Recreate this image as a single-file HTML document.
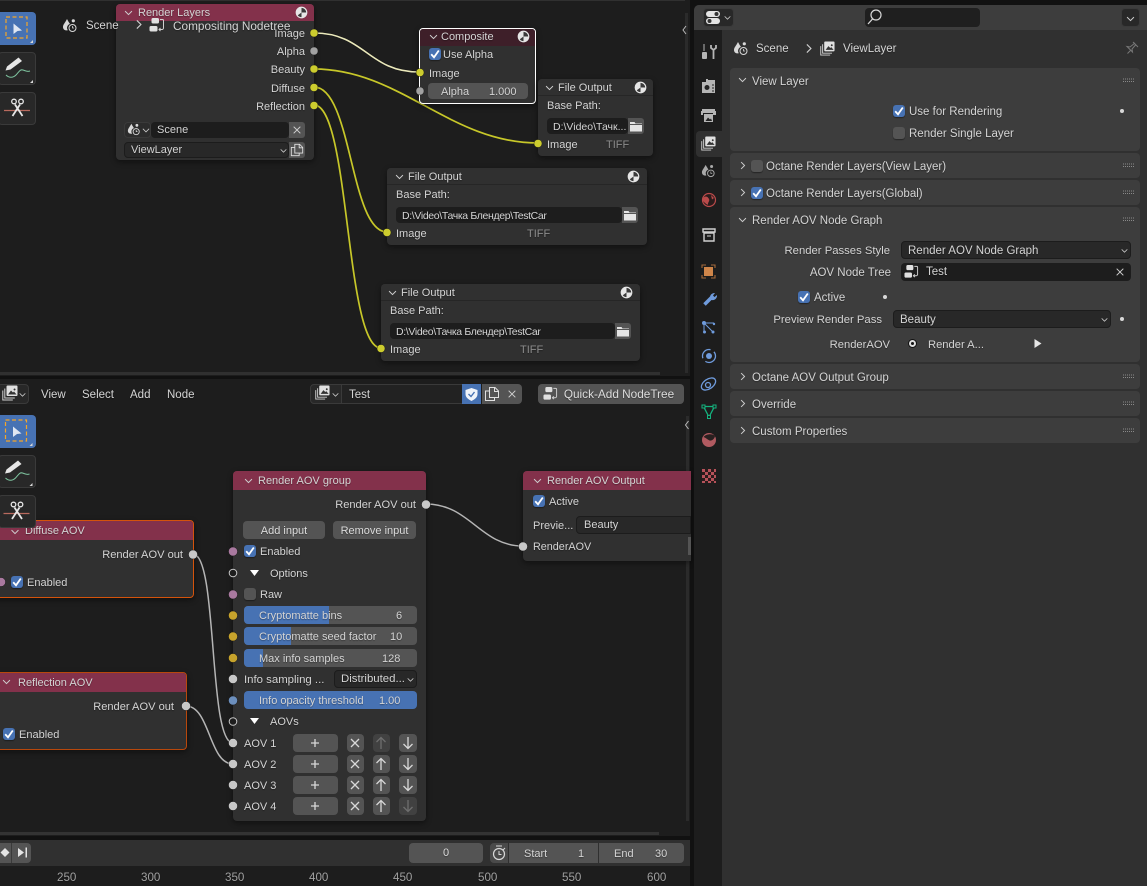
<!DOCTYPE html>
<html><head><meta charset="utf-8"><title>Blender</title>
<style>
html,body{margin:0;padding:0;background:#0e0e0e}
#p{position:relative;width:1147px;height:886px;overflow:hidden;background:#111;font:11px/16px "Liberation Sans","Noto Sans CJK SC",sans-serif;color:#d4d4d4;text-shadow:0 1px 1px rgba(0,0,0,.35)}
#p div,#p span{position:absolute;box-sizing:border-box}
.t{white-space:nowrap;height:16px;margin-top:1px}
.pt{font-size:11.5px}
.r{color:#a0a0a0;font-size:11.600px}
.n{background:#303030;border-radius:4px;box-shadow:0 2px 6px rgba(0,0,0,.45)}
.h{left:0;right:0;top:0;background:#83314b;border-radius:4px 4px 0 0}
.btn{background:#545454;border-radius:4px;text-align:center;height:18px;line-height:18px;color:#dcdcdc;padding-top:1px}
.sl{background:#545454;border-radius:4px;height:18px;overflow:hidden}
.fi{background:#4772b3;left:0;top:0;bottom:0}
.fd{background:#1d1d1d;border-radius:4px;height:18px;line-height:18px;padding-top:1px}
.dd{background:#282828;border-radius:4px;height:18px;line-height:18px;border:1px solid #1c1c1c;padding-top:1px}
.pth{font-size:10.5px;letter-spacing:-.35px}
.cb{width:12px;height:12px;border-radius:3px;background:#4772b3;box-shadow:0 1px 1px rgba(0,0,0,.4)}
.cu{width:12px;height:12px;border-radius:3px;background:#545454;box-shadow:0 1px 1px rgba(0,0,0,.4)}
.pn{background:#3d3d3d;border-radius:4px;left:730px;width:410px}
.tb{background:#282828;border:1px solid #3a3a3a;border-radius:4px}
.a{background:#545454;border-radius:4px;height:18px}
svg{position:absolute;left:0;top:0;overflow:visible}
</style></head><body><div id="p">
<svg width="0" height="0" style="position:absolute"><defs>
<symbol id="chd" viewBox="0 0 16 16"><path d="M3 6l5 5 5-5" fill="none" stroke="currentColor" stroke-width="1.4"/></symbol>
<symbol id="chr" viewBox="0 0 16 16"><path d="M6 3l5 5-5 5" fill="none" stroke="currentColor" stroke-width="1.4"/></symbol>
<symbol id="chk" viewBox="0 0 13 13"><path d="M2.200 6.300l2.800 3 4.800-6.800" fill="none" stroke="#fff" stroke-width="1.800"/></symbol>
<symbol id="x" viewBox="0 0 12 12"><path d="M2 2l8 8M10 2l-8 8" stroke="currentColor" stroke-width="1.2"/></symbol>
<symbol id="sph" viewBox="0 0 14 14"><circle cx="7" cy="7" r="6.300" fill="#e6e6e6"/><path d="M7 2a5 5 0 0 1 5 5H7zM7 7L3 10a5 5 0 0 0 4 2z" fill="#3a3a3a"/></symbol>
<symbol id="scene" viewBox="0 0 16 16"><path d="M5 2C3 6 1 7.500 1 10c0 2 1.500 3.400 3.500 3.400 0.500 0 0.900-0.100 1.300-0.300C5 12 4.700 10.500 5.500 9 6.200 7.800 7 7.200 8 7 7 5.500 6 4 5 2z" fill="#d8d8d8"/><circle cx="11.300" cy="3.800" r="1.600" fill="#d8d8d8"/><circle cx="10.500" cy="11" r="3.500" fill="none" stroke="#d8d8d8" stroke-width="1"/><path d="M10.500 9v2h1.500" fill="none" stroke="#d8d8d8" stroke-width=".8"/></symbol>
<symbol id="tree" viewBox="0 0 16 16"><rect x="2.500" y="1" width="7.500" height="5.500" rx="1.500" fill="#e0e0e0"/><rect x="0.500" y="9" width="8" height="5.500" rx="1.500" fill="#e0e0e0"/><path d="M11 2.500h2.500a1 1 0 0 1 1 1V11a1.500 1.500 0 0 1-1.500 1.500h-2.500M11.500 11l-1.500 1.500 1.500 1.500" fill="none" stroke="#d0d0d0"/></symbol>
<symbol id="vl" viewBox="0 0 16 16"><rect x="4.500" y="0.500" width="11" height="10.500" fill="#e0e0e0" rx="1"/><path d="M6 9.500l3-4 2 2 1-1 2.500 3zM12.500 3.500a1 1 0 1 0 .1 0" fill="#333"/><path d="M2.800 3.500V13h10M0.800 5.500V15h10" fill="none" stroke="#d0d0d0" stroke-width="1"/></symbol>
<symbol id="folder" viewBox="0 0 14 14"><path d="M1 3h4.500l1 1.500H13V5H1zM1 6h12v6.500H1z" fill="#e4e4e4"/></symbol>
<symbol id="dup" viewBox="0 0 16 16"><path d="M5.500 1.500h5.500l3.500 3.500v6.500h-9zM10.500 1.500v4h4M5.500 5H1.500v9.500h9v-3" fill="none" stroke="#e0e0e0"/></symbol>
<symbol id="box" viewBox="0 0 33 33"><rect x="6" y="5" width="21" height="21" fill="none" stroke="#f4a62a" stroke-width="1.200" stroke-dasharray="4 2.500"/><path d="M13.500 11.500l8.500 7-4.500.5-4 3z" fill="#dfe6f2"/><path d="M33 28v3h-3z" fill="#d8d8d8"/></symbol>
<symbol id="pen" viewBox="0 0 33 33"><path d="M5.500 18.500l1.500-4L18.500 5.500l3.500 3.500L10.500 17.500z" fill="#e6e6e6"/><path d="M6 23c3 3 7 3 10 0s4-6 7-5 4 2 7 1" fill="none" stroke="#7fc5a0" stroke-width="1"/><path d="M33 28v3h-3z" fill="#d8d8d8"/></symbol>
<symbol id="cut" viewBox="0 0 33 33"><path d="M4 18.500h26" stroke="#b96a5e" stroke-width="1.300"/><path d="M12.500 24L20 12.500M22.500 24L15 12.500" stroke="#e6e6e6" stroke-width="1.800" fill="none"/><circle cx="14" cy="9.500" r="2.300" fill="none" stroke="#e6e6e6" stroke-width="1.300"/><circle cx="21" cy="9.500" r="2.300" fill="none" stroke="#e6e6e6" stroke-width="1.300"/></symbol>
</defs></svg>

<!-- top editor -->
<div style="left:0;top:0;width:690px;height:376px;background:#1d1d1d"></div>
<div style="left:0;top:0;width:685px;height:1px;background:#303030"></div>
<div style="left:0;top:372px;width:660px;height:3px;background:#303030"></div>
<!-- bottom editor -->
<div style="left:0;top:379px;width:690px;height:457px;background:#1d1d1d"></div>
<div style="left:0;top:832px;width:659px;height:3px;background:#333"></div>
<div style="left:0;top:840px;width:690px;height:26px;background:#303030"></div>
<div style="left:0;top:866px;width:690px;height:20px;background:#1d1d1d"></div>
<div style="left:685px;top:13px;width:3px;height:360px;background:#2b2b2b"></div>
<div style="left:686px;top:416px;width:3px;height:405px;background:#2b2b2b"></div>

<!-- links -->
<svg width="1147" height="886" fill="none">
<path d="M314 33C365 33 368 72 419 72" stroke="#191919" stroke-width="3"/><path d="M314 33C365 33 368 72 419 72" stroke="#ebe9bb" stroke-width="1.600"/>
<path d="M314 69C400 69 450 143 538 143" stroke="#c7c729" stroke-width="1.700"/>
<path d="M314 87C352 87 350 232 387 232" stroke="#c7c729" stroke-width="1.700"/>
<path d="M314 105C350 105 345 348 381 348" stroke="#c7c729" stroke-width="1.700"/>
<path d="M426 504C470 504 480 546 523 546" stroke="#b5b5b5" stroke-width="1.500"/>
<path d="M193 554C218 554 208 743 233 743" stroke="#b5b5b5" stroke-width="1.500"/>
<path d="M186 706C210 706 209 764 233 764" stroke="#b5b5b5" stroke-width="1.500"/>
</svg>

<!-- Render Layers -->
<div class="n" style="left:116px;top:4px;width:198px;height:156px"><div class="h" style="height:17px"></div></div>
<span class="t" style="left:138px;top:4px">Render Layers</span>
<div class="tb" style="left:124px;top:122px;width:27px;height:16px;background:#2c2c2c"></div>
<div class="fd" style="left:151px;top:122px;width:138px;height:16px;line-height:15px;padding-left:6px">Scene</div>
<div class="a" style="left:289px;top:122px;width:16px;height:16px;border-radius:0 3px 3px 0"></div>
<div class="dd" style="left:124px;top:142px;width:165px;height:16px;line-height:14px;padding-left:6px;padding-top:0">ViewLayer</div>
<div class="a" style="left:289px;top:142px;width:16px;height:16px;border-radius:0 3px 3px 0"></div>
<span class="t" style="right:842px;top:25px">Image</span>
<span class="t" style="right:842px;top:43px">Alpha</span>
<span class="t" style="right:842px;top:61px">Beauty</span>
<span class="t" style="right:842px;top:80px">Diffuse</span>
<span class="t" style="right:842px;top:98px">Reflection</span>

<!-- breadcrumb overlay -->
<span class="t pt" style="left:86px;top:17px">Scene</span>
<span class="t" style="left:173px;top:17px;font-size:11.800px">Compositing Nodetree</span>

<!-- Composite -->
<div class="n" style="left:419px;top:28px;width:117px;height:76px;border:1px solid #fff"><div class="h" style="height:17px;background:#3e1f29;border-radius:3px 3px 0 0"></div></div>
<span class="t" style="left:441px;top:28px">Composite</span>
<div class="cb" style="left:429px;top:48px"></div>
<span class="t" style="left:443px;top:46px">Use Alpha</span>
<span class="t" style="left:429px;top:65px">Image</span>
<div class="a" style="left:428px;top:83px;width:100px;height:16px"></div>
<span class="t" style="left:441px;top:83px">Alpha</span>
<span class="t" style="left:489px;top:83px">1.000</span>

<!-- File outputs -->
<div class="n" style="left:538px;top:79px;width:115px;height:77px"><div class="h" style="height:17px;border-bottom:1px solid #262626;background:#303030"></div></div>
<span class="t" style="left:558px;top:79px">File Output</span>
<span class="t" style="left:547px;top:97px">Base Path:</span>
<div class="fd" style="left:547px;top:118px;width:81px;height:16px;line-height:16px;padding-left:6px;font-size:10.500px">D:\Video\Тачк...</div>
<div class="a" style="left:628px;top:118px;width:16px;height:16px;border-radius:0 3px 3px 0"></div>
<span class="t" style="left:547px;top:136px">Image</span>
<span class="t" style="left:606px;top:136px;color:#8c8c8c">TIFF</span>

<div class="n" style="left:387px;top:168px;width:260px;height:77px"><div class="h" style="height:17px;border-bottom:1px solid #262626;background:#303030"></div></div>
<span class="t" style="left:408px;top:168px">File Output</span>
<span class="t" style="left:396px;top:186px">Base Path:</span>
<div class="fd pth" style="left:396px;top:207px;width:226px;height:16px;line-height:16px;padding-left:6px">D:\Video\Тачка Блендер\TestCar</div>
<div class="a" style="left:622px;top:207px;width:16px;height:16px;border-radius:0 3px 3px 0"></div>
<span class="t" style="left:396px;top:225px">Image</span>
<span class="t" style="left:527px;top:225px;color:#8c8c8c">TIFF</span>

<div class="n" style="left:381px;top:284px;width:259px;height:77px"><div class="h" style="height:17px;border-bottom:1px solid #262626;background:#303030"></div></div>
<span class="t" style="left:401px;top:284px">File Output</span>
<span class="t" style="left:390px;top:302px">Base Path:</span>
<div class="fd pth" style="left:390px;top:323px;width:225px;height:16px;line-height:16px;padding-left:6px">D:\Video\Тачка Блендер\TestCar</div>
<div class="a" style="left:615px;top:323px;width:16px;height:16px;border-radius:0 3px 3px 0"></div>
<span class="t" style="left:390px;top:341px">Image</span>
<span class="t" style="left:520px;top:341px;color:#8c8c8c">TIFF</span>

<!-- top tools -->
<div style="left:0;top:12px;width:36px;height:33px;background:#4772b3;border-radius:0 4px 4px 0"></div>
<div class="tb" style="left:-2px;top:52px;width:38px;height:33px"></div>
<div class="tb" style="left:-2px;top:92px;width:38px;height:33px"></div>

<!-- bottom header -->
<div class="tb" style="left:-3px;top:384px;width:32px;height:20px"></div>
<span class="t pt" style="left:41px;top:386px">View</span>
<span class="t pt" style="left:82px;top:386px">Select</span>
<span class="t pt" style="left:130px;top:386px">Add</span>
<span class="t pt" style="left:167px;top:386px">Node</span>
<div class="tb" style="left:310px;top:384px;width:32px;height:20px;border-radius:4px 0 0 4px"></div>
<div class="fd" style="left:341px;top:384px;width:121px;height:20px;line-height:18px;padding-left:7px;border-radius:0;background:#222;border:1px solid #3a3a3a;border-right:0;font-size:11.500px">Test</div>
<div style="left:462px;top:384px;width:19px;height:20px;background:#4772b3"></div>
<div class="a" style="left:482px;top:384px;width:20px;height:20px;border-radius:0"></div>
<div class="a" style="left:502px;top:384px;width:20px;height:20px;border-radius:0 4px 4px 0"></div>
<div class="btn" style="left:538px;top:384px;width:146px;height:20px;line-height:19px;padding-left:16px;font-size:11.800px">Quick-Add NodeTree</div>

<!-- bottom tools (below nodes) -->
<div style="left:0;top:415px;width:36px;height:33px;background:#4772b3;border-radius:0 4px 4px 0"></div>
<div class="tb" style="left:-2px;top:455px;width:38px;height:33px"></div>

<!-- Diffuse AOV -->
<div class="n" style="left:-20px;top:520px;width:214px;height:78px;border:1px solid #d4530b"><div class="h" style="height:19px;border-radius:3px 3px 0 0"></div></div>
<span class="t" style="left:25px;top:522px">Diffuse AOV</span>
<span class="t" style="right:964px;top:546px;font-size:11.100px">Render AOV out</span>
<div class="cb" style="left:11px;top:576px"></div>
<span class="t" style="left:27px;top:574px">Enabled</span>

<!-- Reflection AOV -->
<div class="n" style="left:-20px;top:672px;width:207px;height:78px;border:1px solid #b8480c"><div class="h" style="height:19px;border-radius:3px 3px 0 0"></div></div>
<span class="t" style="left:18px;top:674px">Reflection AOV</span>
<span class="t" style="right:973px;top:698px;font-size:11.100px">Render AOV out</span>
<div class="cb" style="left:3px;top:728px"></div>
<span class="t" style="left:19px;top:726px">Enabled</span>

<div class="tb" style="left:-2px;top:495px;width:38px;height:33px"></div>

<!-- Render AOV group -->
<div class="n" style="left:233px;top:471px;width:193px;height:350px"><div class="h" style="height:19px"></div></div>
<span class="t" style="left:258px;top:472px">Render AOV group</span>
<span class="t" style="right:731px;top:496px;font-size:11.100px">Render AOV out</span>
<div class="btn" style="left:243px;top:521px;width:82px">Add input</div>
<div class="btn" style="left:333px;top:521px;width:83px">Remove input</div>
<div class="cb" style="left:244px;top:545px"></div><span class="t" style="left:260px;top:543px">Enabled</span>
<span class="t" style="left:270px;top:565px">Options</span>
<div class="cu" style="left:244px;top:588px"></div><span class="t" style="left:260px;top:586px">Raw</span>
<div class="sl" style="left:244px;top:606px;width:173px"><div class="fi" style="width:85px"></div><span class="t" style="left:15px;top:1px">Cryptomatte bins</span><span class="t" style="left:152px;top:1px">6</span></div>
<div class="sl" style="left:244px;top:627px;width:173px"><div class="fi" style="width:47px"></div><span class="t" style="left:15px;top:1px">Cryptomatte seed factor</span><span class="t" style="left:146px;top:1px">10</span></div>
<div class="sl" style="left:244px;top:649px;width:173px"><div class="fi" style="width:19px"></div><span class="t" style="left:15px;top:1px">Max info samples</span><span class="t" style="left:138px;top:1px">128</span></div>
<span class="t" style="left:244px;top:671px;font-size:11.400px">Info sampling ...</span>
<div class="dd" style="left:334px;top:670px;width:83px;padding-left:6px;line-height:16px;padding-top:0;font-size:11.400px">Distributed...</div>
<div class="sl" style="left:244px;top:691px;width:173px;background:#4772b3"><span class="t" style="left:15px;top:1px">Info opacity threshold</span><span class="t" style="left:135px;top:1px">1.00</span></div>
<span class="t" style="left:270px;top:713px">AOVs</span>
<span class="t" style="left:244px;top:735px">AOV 1</span><span class="t" style="left:244px;top:756px">AOV 2</span><span class="t" style="left:244px;top:777px">AOV 3</span><span class="t" style="left:244px;top:798px">AOV 4</span>
<div class="a" style="left:293px;top:734px;width:45px"></div><div class="a" style="left:293px;top:755px;width:45px"></div><div class="a" style="left:293px;top:776px;width:45px"></div><div class="a" style="left:293px;top:797px;width:45px"></div>
<div class="a" style="left:347px;top:734px;width:17px"></div><div class="a" style="left:347px;top:755px;width:17px"></div><div class="a" style="left:347px;top:776px;width:17px"></div><div class="a" style="left:347px;top:797px;width:17px"></div>
<div class="a" style="left:373px;top:734px;width:17px;background:#414141"></div><div class="a" style="left:373px;top:755px;width:17px"></div><div class="a" style="left:373px;top:776px;width:17px"></div><div class="a" style="left:373px;top:797px;width:17px"></div>
<div class="a" style="left:399px;top:734px;width:18px"></div><div class="a" style="left:399px;top:755px;width:18px"></div><div class="a" style="left:399px;top:776px;width:18px"></div><div class="a" style="left:399px;top:797px;width:18px;background:#414141"></div>

<!-- Render AOV Output -->
<div class="n" style="left:523px;top:471px;width:168px;height:90px;border-radius:4px 0 0 4px"><div class="h" style="height:19px;border-radius:4px 0 0 0"></div></div>
<span class="t" style="left:547px;top:472px">Render AOV Output</span>
<div class="cb" style="left:533px;top:495px"></div><span class="t" style="left:549px;top:493px">Active</span>
<span class="t" style="left:533px;top:517px">Previe...</span>
<div class="dd" style="left:576px;top:516px;width:115px;padding-left:7px;line-height:16px;padding-top:0;border-radius:4px 0 0 4px">Beauty</div>
<span class="t" style="left:533px;top:538px;font-size:10.800px">RenderAOV</span>
<div style="left:688px;top:537px;width:3px;height:18px;background:#545454"></div>

<!-- timeline -->
<div class="a" style="left:-4px;top:843px;width:35px;height:20px"></div>
<div style="left:11px;top:843px;width:1px;height:20px;background:#3a3a3a"></div>
<div class="btn" style="left:409px;top:843px;width:74px;height:20px;line-height:18px">0</div>
<div class="a" style="left:490px;top:843px;width:18px;height:20px;border-radius:4px 0 0 4px;background:#4a4a4a"></div>
<div class="a" style="left:509px;top:843px;width:89px;height:20px;border-radius:0"></div>
<div class="a" style="left:599px;top:843px;width:85px;height:20px;border-radius:0 4px 4px 0"></div>
<span class="t" style="left:524px;top:845px">Start</span><span class="t" style="left:578px;top:845px">1</span>
<span class="t" style="left:614px;top:845px">End</span><span class="t" style="left:655px;top:845px">30</span>
<span class="t r" style="left:57px;top:869px">250</span><span class="t r" style="left:141px;top:869px">300</span><span class="t r" style="left:225px;top:869px">350</span><span class="t r" style="left:309px;top:869px">400</span><span class="t r" style="left:393px;top:869px">450</span><span class="t r" style="left:478px;top:869px">500</span><span class="t r" style="left:562px;top:869px">550</span><span class="t r" style="left:647px;top:869px">600</span>

<!-- properties -->
<div style="left:694px;top:5px;width:453px;height:881px;background:#303030;border-radius:5px 0 0 0"></div>
<div style="left:694px;top:5px;width:453px;height:25px;background:#3d3d3d;border-radius:5px 0 0 0"></div>
<div style="left:694px;top:30px;width:28px;height:856px;background:#1d1d1d"></div>
<div style="left:696px;top:131px;width:26px;height:26px;background:#303030;border-radius:4px 0 0 4px"></div>
<div class="tb" style="left:703px;top:8px;width:31px;height:19px;background:#282828"></div>
<div class="fd" style="left:865px;top:8px;width:115px;height:19px;background:#1f1f1f"></div>
<div class="tb" style="left:1121px;top:8px;width:19px;height:19px"></div>
<span class="t pt" style="left:756px;top:40px">Scene</span>
<span class="t pt" style="left:843px;top:40px">ViewLayer</span>

<div class="pn" style="top:68px;height:83px"></div>
<div class="pn" style="top:153px;height:25px"></div>
<div class="pn" style="top:180px;height:25px"></div>
<div class="pn" style="top:207px;height:155px"></div>
<div class="pn" style="top:364px;height:25px"></div>
<div class="pn" style="top:391px;height:25px"></div>
<div class="pn" style="top:418px;height:25px"></div>
<span class="t pt" style="left:752px;top:73px">View Layer</span>
<div class="cb" style="left:893px;top:105px"></div><span class="t pt" style="left:909px;top:103px">Use for Rendering</span>
<div class="cu" style="left:893px;top:127px"></div><span class="t pt" style="left:909px;top:125px">Render Single Layer</span>
<div class="cu" style="left:751px;top:160px"></div><span class="t pt" style="left:766px;top:158px">Octane Render Layers(View Layer)</span>
<div class="cb" style="left:751px;top:187px"></div><span class="t pt" style="left:766px;top:185px">Octane Render Layers(Global)</span>
<span class="t pt" style="left:752px;top:212px">Render AOV Node Graph</span>
<span class="t" style="right:257px;top:242px;font-size:11.300px">Render Passes Style</span>
<div class="dd" style="left:901px;top:241px;width:230px;padding-left:6px;line-height:16px;font-size:11.500px">Render AOV Node Graph</div>
<span class="t pt" style="right:256px;top:264px">AOV Node Tree</span>
<div class="fd" style="left:901px;top:263px;width:230px;padding-left:25px;line-height:17px;font-size:11.500px">Test</div>
<div class="cb" style="left:798px;top:291px"></div><span class="t pt" style="left:814px;top:289px">Active</span>
<span class="t" style="right:265px;top:311px;font-size:11.300px">Preview Render Pass</span>
<div class="dd" style="left:893px;top:310px;width:218px;padding-left:6px;line-height:16px;font-size:11.500px">Beauty</div>
<span class="t pt" style="right:257px;top:336px;font-size:11.200px">RenderAOV</span>
<span class="t" style="left:928px;top:336px;font-size:11.200px">Render A...</span>
<span class="t pt" style="left:752px;top:369px">Octane AOV Output Group</span>
<span class="t pt" style="left:752px;top:396px">Override</span>
<span class="t pt" style="left:752px;top:423px">Custom Properties</span>

<!-- icons & sockets -->
<svg width="1147" height="886" style="color:#cfcfcf">
<use href="#box" x="0" y="12" width="33" height="33"/><use href="#pen" x="0" y="52" width="33" height="33"/><use href="#cut" x="0" y="92" width="33" height="33"/>
<use href="#box" x="-0.500" y="415" width="33" height="33"/><use href="#pen" x="-0.500" y="455" width="33" height="33"/><use href="#cut" x="-0.500" y="495" width="33" height="33"/>
<use href="#scene" x="62" y="17" width="16" height="16"/><use href="#chr" x="132" y="18" width="13" height="13"/><use href="#tree" x="149" y="17" width="16" height="16"/>
<use href="#chd" x="123" y="7" width="11" height="11"/><use href="#sph" x="295" y="6" width="13" height="13"/>
<use href="#scene" x="127" y="122" width="14" height="14"/><use href="#chd" x="141" y="125" width="10" height="10"/><use href="#x" x="292" y="125" width="10" height="10"/><use href="#chd" x="279" y="146" width="9" height="9"/><use href="#dup" x="290" y="143" width="14" height="14"/>
<use href="#chd" x="428" y="31" width="11" height="11"/><use href="#sph" x="517" y="30" width="13" height="13"/><use href="#chk" x="429" y="48" width="13" height="13"/>
<use href="#chd" x="544" y="82" width="11" height="11"/><use href="#sph" x="634" y="81" width="13" height="13"/><use href="#folder" x="629" y="119" width="14" height="14"/>
<use href="#chd" x="394" y="171" width="11" height="11"/><use href="#sph" x="627" y="170" width="13" height="13"/><use href="#folder" x="623" y="208" width="14" height="14"/>
<use href="#chd" x="387" y="287" width="11" height="11"/><use href="#sph" x="620" y="286" width="13" height="13"/><use href="#folder" x="616" y="324" width="14" height="14"/>
<use href="#chd" x="9.500" y="526" width="11" height="11"/><use href="#chk" x="11" y="576" width="13" height="13"/>
<use href="#chd" x="1" y="676" width="11" height="11"/><use href="#chk" x="3" y="728" width="13" height="13"/>
<use href="#chd" x="243" y="475" width="11" height="11"/><use href="#chk" x="244" y="545" width="13" height="13"/>
<path d="M250 570h9l-4.500 6zM250 718h9l-4.500 6z" fill="#fff"/>
<use href="#chd" x="532" y="475" width="11" height="11"/><use href="#chk" x="533" y="495" width="13" height="13"/>
<use href="#chd" x="406" y="675" width="9" height="9"/>
<!-- AOV row icons -->
<g stroke="#d8d8d8" stroke-width="1.300" fill="none">
<path d="M315 739v8M311 743h8M315 760v8M311 764h8M315 781v8M311 785h8M315 802v8M311 806h8"/>
<path d="M351 739l8 8M359 739l-8 8M351 760l8 8M359 760l-8 8M351 781l8 8M359 781l-8 8M351 802l8 8M359 802l-8 8"/>
<path d="M381 759v11M376.500 763l4.500-4.500 4.500 4.500M381 780v11M376.500 784l4.500-4.500 4.500 4.500M381 801v11M376.500 805l4.500-4.500 4.500 4.500"/>
<path d="M408 737v11M403.500 744l4.500 4.500 4.500-4.500M408 758v11M403.500 765l4.500 4.500 4.500-4.500M408 779v11M403.500 786l4.500 4.500 4.500-4.500"/>
<path d="M381 738v11M376.500 742l4.500-4.500 4.500 4.500M408 800v11M403.500 807l4.500 4.500 4.500-4.500" stroke="#6e6e6e"/>
</g>
<!-- header icons -->
<use href="#vl" x="2" y="385" width="16" height="16"/><use href="#chd" x="18" y="390" width="9" height="9"/>
<use href="#vl" x="315" y="385" width="15" height="15"/><use href="#chd" x="331" y="390" width="9" height="9"/>
<path d="M471.500 388l6 2v4c0 3.500-3 5.500-6 7-3-1.500-6-3.500-6-7v-4z" fill="#f0f4fa"/><path d="M468.500 394l2.500 2.500 3.500-4.500" stroke="#4772b3" stroke-width="1.400" fill="none"/>
<use href="#dup" x="484" y="386" width="16" height="16"/><use href="#x" x="507" y="389" width="10" height="10"/>
<use href="#tree" x="543" y="386" width="15" height="15"/>
<path d="M686 26l-3 4 3 4M688.500 421l-3 4 3 4" stroke="#bbb" fill="none"/>
<!-- timeline icons -->
<path d="M5 848l4.500 4.500L5 857l-4.500-4.500z" fill="#e4e4e4"/><path d="M18 848l6 4.500-6 4.500zM25.500 847.500h1.500v10h-1.500z" fill="#e4e4e4"/>
<circle cx="499" cy="854" r="5.500" fill="none" stroke="#d8d8d8" stroke-width="1.200"/><path d="M499 851v3.500h2.500M496 846h6M505 848l-2 2" stroke="#d8d8d8" fill="none"/>
<!-- properties icons -->
<rect x="706" y="11" width="14" height="6" rx="3" fill="#e4e4e4"/><rect x="706" y="18" width="14" height="6" rx="3" fill="#e4e4e4"/><circle cx="716.500" cy="14" r="2" fill="#333"/><circle cx="709.500" cy="21" r="2" fill="#333"/>
<use href="#chd" x="723" y="13" width="9" height="9"/>
<circle cx="876" cy="15" r="5" fill="none" stroke="#d8d8d8" stroke-width="1.200"/><path d="M872.500 19l-4.500 5" stroke="#d8d8d8" stroke-width="1.300"/>
<use href="#chd" x="1125" y="13" width="11" height="11"/>
<use href="#scene" x="733" y="40" width="16" height="16"/><use href="#chr" x="802" y="42" width="13" height="13"/><use href="#vl" x="820" y="41" width="15" height="15"/>
<path d="M1133 42l5 5M1135 43l-5 4-3-.5 5.500 5.500-.5-3 4-4.500M1127.500 53.500l3-3" stroke="#777" fill="none"/>
<!-- tab icons -->
<path d="M704 44v7" stroke="#b5b5b5"/><rect x="702" y="52" width="5" height="7" rx="1" fill="#b5b5b5"/><path d="M711 45v3l2.500 2 2.500-2v-3M713.500 50v9" stroke="#b5b5b5" stroke-width="1.800" fill="none"/>
<path d="M702 82h13v-2h-7v-1h-2v3h-4zM702 82h13v11h-13z" fill="#b5b5b5"/><circle cx="707" cy="87.500" r="2.500" fill="#222"/><path d="M712 85h2M712 88h2M712 91h2" stroke="#222"/>
<path d="M702 109h13v2h1v4h-3v-2H703v2h-2v-4h1z" fill="#b5b5b5"/><rect x="704" y="114" width="9" height="8" fill="#b5b5b5"/><path d="M705.500 121l2.500-3.500 2 2 1-1 1 2.500z" fill="#222"/>
<use href="#vl" x="701" y="136" width="15" height="15"/>
<use href="#scene" x="701" y="163" width="15" height="15" style="opacity:.75"/>
<circle cx="709" cy="200" r="6.500" fill="#2a1c1c" stroke="#b94a4a" stroke-width="1.200"/><path d="M703 198c3-3 5-1 6 1s-1 3-1 5-3-1-5-3zM711 195l3 3-2 1.500z" fill="#b94a4a"/>
<path d="M703 229h12v3h-12zM704 233h10v8h-10z" fill="none" stroke="#d0d0d0" stroke-width="1.400"/><path d="M707 236h4" stroke="#d0d0d0"/>
<rect x="704" y="267" width="9" height="9" fill="#d0864a"/><path d="M702 268v-3h4M711 265h4v3M715 275v3h-4M706 278h-4v-3" fill="none" stroke="#a4693a" stroke-width="1.100"/>
<path d="M704.500 304.500L711.500 297.500" stroke="#6f9bdc" stroke-width="3.500"/><path d="M710 298a4.500 4.500 0 0 1 5-5l-2 2.500 1.500 1.500 2.500-2a4.500 4.500 0 0 1-5.500 5z" fill="#6f9bdc"/>
<circle cx="704" cy="323" r="2" fill="#6f9bdc"/><circle cx="704.500" cy="332" r="1.500" fill="#6f9bdc"/><circle cx="713" cy="332" r="1.500" fill="#6f9bdc"/><circle cx="714" cy="324" r="1.200" fill="#6f9bdc"/><path d="M704 323v9M704 323l9 9M704 323h10" stroke="#6f9bdc"/>
<circle cx="709" cy="356" r="6.500" fill="none" stroke="#6f9bdc" stroke-width="1.300" stroke-dasharray="14 4"/><circle cx="709" cy="356" r="3" fill="#6f9bdc"/>
<ellipse cx="708.500" cy="384" rx="8" ry="4.800" transform="rotate(-35 708.500 384)" fill="none" stroke="#6f9bdc" stroke-width="1.300"/><circle cx="708" cy="385" r="2.500" fill="none" stroke="#6f9bdc" stroke-width="1.300"/>
<path d="M703.500 406.500h11L709 417z" fill="none" stroke="#14b27e" stroke-width="1.300"/><rect x="702" y="405" width="3" height="3" fill="#1d1d1d" stroke="#14b27e"/><rect x="713" y="405" width="3" height="3" fill="#1d1d1d" stroke="#14b27e"/><rect x="707.500" y="415.500" width="3" height="3" fill="#1d1d1d" stroke="#14b27e"/>
<circle cx="709" cy="440" r="7" fill="#b05a60"/><path d="M703.500 437c2-3 9-4 11.500-1-0.500 3-3 5-5.500 4.500-2-1-4-3-6-3.500z" fill="#2a2020"/>
<g fill="#b5525a"><rect x="702" y="469" width="14" height="14" fill="#2a1c1c"/><path d="M702 469h3v3h-3zM708 469h3v3h-3zM714 469h2v3h-2zM705 472h3v3h-3zM711 472h3v3h-3zM702 475h3v3h-3zM708 475h3v3h-3zM714 475h2v3h-2zM705 478h3v3h-3zM711 478h3v3h-3zM702 481h3v2h-3zM708 481h3v2h-3zM714 481h2v2h-2z"/></g>
<!-- panel chevrons -->
<use href="#chd" x="737" y="74" width="11" height="11"/><use href="#chr" x="737" y="160" width="11" height="11"/><use href="#chr" x="737" y="187" width="11" height="11"/><use href="#chd" x="737" y="214" width="11" height="11"/><use href="#chr" x="737" y="371" width="11" height="11"/><use href="#chr" x="737" y="398" width="11" height="11"/><use href="#chr" x="737" y="425" width="11" height="11"/>
<g stroke="#8a8a8a" stroke-dasharray="1 1"><path d="M1123 79h11M1123 81.500h11M1123 164h11M1123 166.500h11M1123 191h11M1123 193.500h11M1123 218h11M1123 220.500h11M1123 375h11M1123 377.500h11M1123 402h11M1123 404.500h11M1123 429h11M1123 431.500h11"/></g>
<use href="#chk" x="893" y="105" width="13" height="13"/><use href="#chk" x="751" y="187" width="13" height="13"/><use href="#chk" x="798" y="291" width="13" height="13"/>
<circle cx="1122" cy="111" r="2" fill="#d8d8d8"/><circle cx="1122" cy="319" r="2" fill="#d8d8d8"/><circle cx="885" cy="297" r="2" fill="#d8d8d8"/>
<use href="#chd" x="1120" y="246" width="9" height="9"/><use href="#chd" x="1100" y="315" width="9" height="9"/>
<use href="#tree" x="904" y="264" width="15" height="15"/><use href="#x" x="1115" y="267" width="10" height="10"/>
<circle cx="912.500" cy="343.500" r="4.500" fill="#111"/><circle cx="912.500" cy="343.500" r="3.500" fill="#ddd"/><circle cx="912.500" cy="343.500" r="1.500" fill="#111"/>
<path d="M1034.500 339l7 4.500-7 4.500z" fill="#e6e6e6"/>
<!-- sockets -->
<g stroke="#141414" stroke-width=".4">
<g fill="#cccc2e"><circle cx="314" cy="33" r="4"/><circle cx="314" cy="69" r="4"/><circle cx="314" cy="87.500" r="4"/><circle cx="314" cy="105.500" r="4"/><circle cx="420" cy="72.500" r="4"/><circle cx="538" cy="143.500" r="4"/><circle cx="387" cy="232.500" r="4"/><circle cx="381" cy="348.500" r="4"/></g>
<g fill="#a1a1a1"><circle cx="314" cy="51" r="4"/><circle cx="420" cy="91" r="4"/></g>
<g fill="#c8c8c8"><circle cx="426" cy="504.500" r="4.500"/><circle cx="523" cy="546.500" r="4.500"/><circle cx="193" cy="554.500" r="4.500"/><circle cx="186" cy="706" r="4.500"/><circle cx="233" cy="679" r="4.500"/><circle cx="233" cy="743" r="4.500"/><circle cx="233" cy="764" r="4.500"/><circle cx="233" cy="785" r="4.500"/><circle cx="233" cy="806" r="4.500"/></g>
<g fill="#a9799f"><circle cx="233" cy="551.500" r="4.500"/><circle cx="233" cy="594.500" r="4.500"/><circle cx="1" cy="582" r="4.500"/></g>
<g fill="#c7a32c"><circle cx="233" cy="615.500" r="4.500"/><circle cx="233" cy="636.500" r="4.500"/><circle cx="233" cy="658" r="4.500"/></g>
<circle cx="233" cy="700.500" r="4.500" fill="#6c8fbd"/>
<g fill="#1d1d1d" stroke="#c8c8c8" stroke-width="1"><circle cx="233" cy="573" r="3.800"/><circle cx="233" cy="721.500" r="3.800"/></g>
</g>
</svg>
</div></body></html>
